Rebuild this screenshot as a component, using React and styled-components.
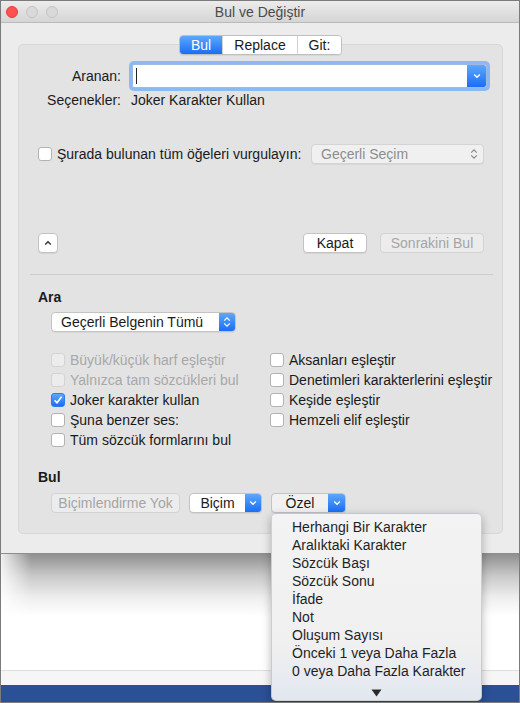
import React from 'react';
import styled, { createGlobalStyle } from 'styled-components';

const GlobalStyle = createGlobalStyle`
  html, body { margin: 0; padding: 0; background: #fff; }
  body {
    font-family: "Liberation Sans", Arial, sans-serif;
    font-size: 14px;
    color: #1a1a1a;
  }
  * { box-sizing: border-box; }
`;

const blueFill = 'linear-gradient(#5ea7fc, #1a6ef5)';

const ChevronDown = () => (
  <svg width="8" height="6" viewBox="0 0 8 6">
    <path d="M1.2 1.5L4 4.3 6.8 1.5" fill="none" stroke="#fff" strokeWidth="1.4" />
  </svg>
);

const UpDown = ({ color }) => (
  <svg width="8" height="12" viewBox="0 0 8 12">
    <path d="M1.2 4.6L4 1.8 6.8 4.6M1.2 7.4L4 10.2 6.8 7.4" fill="none" stroke={color} strokeWidth="1.2" />
  </svg>
);

const CaretUp = () => (
  <svg width="8" height="6" viewBox="0 0 8 6">
    <path d="M1.2 4.5L4 1.7 6.8 4.5" fill="none" stroke="#333" strokeWidth="1.4" />
  </svg>
);

const Tick = () => (
  <svg width="12" height="12" viewBox="0 0 12 12">
    <path d="M2.6 6.4L5 8.8 9.6 2.8" fill="none" stroke="#fff" strokeWidth="1.7" />
  </svg>
);

const Frame = styled.div`
  width: 520px;
  height: 703px;
  border: 1px solid #7b7b7b;
  display: flex;
  flex-direction: column;
  overflow: hidden;
  background: #fff;
`;

const Window = styled.div`
  background: #ececec;
  border-bottom: 1px solid #8e8e8e;
`;

const TitleBar = styled.div`
  height: 22px;
  display: grid;
  grid-template-columns: 1fr auto 1fr;
  align-items: center;
  padding: 0 5px;
  background: linear-gradient(#ececec, #d5d5d5);
  border-bottom: 1px solid #bababa;
`;

const Lights = styled.div`
  display: flex;
  gap: 8px;
`;

const Light = styled.span`
  width: 12px;
  height: 12px;
  border-radius: 50%;
  background: ${p => p.$red ? '#fd5250' : '#d9d9d9'};
  border: 1px solid ${p => p.$red ? '#e0403e' : '#c4c4c4'};
`;

const Title = styled.div`
  color: #4b4b4b;
  font-size: 14px;
`;

const Body = styled.div`
  padding: 12px 16px 19px 17px;
  display: flex;
  flex-direction: column;
`;

const TabGroup = styled.div`
  align-self: center;
  display: flex;
  height: 20px;
  margin-bottom: -11px;
  position: relative;
  z-index: 1;
  border: 1px solid #bfbfbf;
  border-radius: 4px;
  overflow: hidden;
  background: #fff;
  box-shadow: 0 1px 0 rgba(0, 0, 0, 0.05);
`;

const Tab = styled.div`
  width: ${p => p.$w}px;
  line-height: 18px;
  text-align: center;
  color: ${p => p.$active ? '#fff' : '#1a1a1a'};
  background: ${p => p.$active ? blueFill : '#fff'};
  & + & { border-left: 1px solid #d2d2d2; }
`;

const Panel = styled.div`
  background: #e3e3e3;
  border: 1px solid #d8d8d8;
  border-radius: 5px;
  padding: 19px 18px 20px 19px;
  display: flex;
  flex-direction: column;
`;

const FieldRow = styled.div`
  display: flex;
  align-items: center;
  height: ${p => p.$h}px;
  margin-top: ${p => p.$mt || 0}px;
`;

const FieldLabel = styled.div`
  width: 83px;
  text-align: right;
  margin-right: ${p => p.$gap}px;
  white-space: nowrap;
`;

const SearchField = styled.div`
  flex: 1;
  height: 24px;
  margin-right: -3px;
  display: flex;
  background: #fff;
  border: 1px solid #9dbbe2;
  border-radius: 2px;
  box-shadow: 0 0 0 3px #8ab9f4;
`;

const Caret = styled.span`
  width: 1px;
  height: 16px;
  margin: 3px 0 0 3px;
  background: #222;
`;

const FieldArrow = styled.span`
  margin-left: auto;
  width: 19px;
  display: flex;
  align-items: center;
  justify-content: center;
  background: ${blueFill};
  border-radius: 0 2px 2px 0;
`;

const CheckRow = styled.label`
  display: flex;
  align-items: center;
  gap: 5px;
  height: 20px;
  white-space: nowrap;
  color: ${p => p.$disabled ? '#a8a8a8' : '#1a1a1a'};
`;

const Box = styled.span`
  width: 14px;
  height: 14px;
  flex-shrink: 0;
  border-radius: 3px;
  display: inline-flex;
  align-items: center;
  justify-content: center;
  border: 1px solid ${p => p.$checked ? '#2d7bf1' : p.$disabled ? '#d3d3d3' : '#b3b3b3'};
  background: ${p => p.$checked ? blueFill : p.$disabled ? '#ececec' : '#fff'};
`;

const Select = styled.div`
  width: ${p => p.$w}px;
  height: 20px;
  margin-left: ${p => p.$push ? 'auto' : '0'};
  display: flex;
  align-items: stretch;
  border: 1px solid ${p => p.$disabled ? '#d4d4d4' : '#c4c4c4'};
  border-radius: 4px;
  overflow: hidden;
  background: ${p => p.$disabled ? '#f0f0f0' : '#fff'};
  color: ${p => p.$disabled ? '#8d8d8d' : '#1a1a1a'};
  box-shadow: 0 1px 0 rgba(0, 0, 0, 0.05);
`;

const SelectText = styled.span`
  flex: 1;
  line-height: 18px;
  padding-left: ${p => p.$pl}px;
  white-space: nowrap;
`;

const Stepper = styled.span`
  width: ${p => p.$w}px;
  display: flex;
  align-items: center;
  justify-content: center;
  background: ${p => p.$blue ? blueFill : 'transparent'};
`;

const ButtonRow = styled.div`
  display: flex;
  align-items: center;
  gap: ${p => p.$gap || 0}px;
  height: 20px;
  margin-top: ${p => p.$mt}px;
  padding-left: ${p => p.$indent || 0}px;
`;

const PushButton = styled.button`
  width: ${p => p.$w}px;
  height: 20px;
  padding: 0;
  margin-left: ${p => p.$ml || 0}px;
  display: flex;
  align-items: center;
  justify-content: center;
  font-family: inherit;
  font-size: 14px;
  white-space: nowrap;
  border-radius: 4px;
  border: 1px solid ${p => p.disabled ? '#d3d3d3' : '#c3c3c3'};
  background: ${p => p.disabled ? '#ececec' : '#fff'};
  color: ${p => p.disabled ? '#a5a5a5' : '#1a1a1a'};
  box-shadow: ${p => p.disabled ? 'none' : '0 1px 0 rgba(0,0,0,0.06)'};
`;

const Separator = styled.div`
  height: 1px;
  background: #cdcdcd;
  margin: 21px -9px 0 -8px;
`;

const Heading = styled.div`
  font-weight: bold;
  height: 16px;
  line-height: 16px;
  margin-top: ${p => p.$mt}px;
`;

const Indent = styled.div`
  padding-left: 13px;
  margin-top: ${p => p.$mt}px;
`;

const OptionGrid = styled.div`
  display: grid;
  grid-template-columns: 219px 1fr;
  grid-auto-flow: column;
  grid-template-rows: repeat(5, 20px);
  padding-left: 13px;
  margin-top: 18px;
`;

const PopupWrap = styled.div`
  position: relative;
`;

const PopupButton = styled.div`
  width: ${p => p.$w}px;
  height: 20px;
  display: flex;
  border: 1px solid #c3c3c3;
  border-radius: 4px;
  overflow: hidden;
  background: ${p => p.$open ? '#f1f1f1' : '#fff'};
  box-shadow: 0 1px 0 rgba(0, 0, 0, 0.06);
`;

const PopupText = styled.span`
  flex: 1;
  text-align: center;
  line-height: 18px;
`;

const Menu = styled.div`
  position: absolute;
  top: 100%;
  left: 0;
  width: 211px;
  height: 188px;
  z-index: 5;
  padding-top: 4px;
  border: 1px solid rgba(0, 0, 0, 0.14);
  border-radius: 5px;
  background: linear-gradient(#f3f3f3, #f0f0f0 70%, #e2e7f0);
  box-shadow: 0 3px 10px rgba(0, 0, 0, 0.28);
`;

const MenuItem = styled.div`
  height: 18px;
  line-height: 18px;
  padding-left: 20px;
  color: #1f1f1f;
  white-space: nowrap;
`;

const MenuMore = styled.div`
  height: 18px;
  margin-top: 4px;
  display: flex;
  align-items: center;
  justify-content: center;
`;

const Desktop = styled.div`
  flex: 1;
  display: flex;
  flex-direction: column;
`;

const Shade = styled.div`
  flex: 1;
  background:
    linear-gradient(to right, rgba(255,255,255,0.85), rgba(255,255,255,0) 30px),
    linear-gradient(#8f8f8f, #c9c9c9 22px, #efefef 44px, #fff 62px);
`;

const Strip = styled.div`
  height: 15px;
  border-top: 1px solid #dfdfdf;
  background: #f6f6f6;
`;

const Ribbon = styled.div`
  height: 17px;
  background: #2a5096;
`;

const leftOptions = [
  { text: 'Büyük/küçük harf eşleştir', disabled: true },
  { text: 'Yalnızca tam sözcükleri bul', disabled: true },
  { text: 'Joker karakter kullan', checked: true },
  { text: 'Şuna benzer ses:' },
  { text: 'Tüm sözcük formlarını bul' },
];

const rightOptions = [
  'Aksanları eşleştir',
  'Denetimleri karakterlerini eşleştir',
  'Keşide eşleştir',
  'Hemzeli elif eşleştir',
];

const specials = [
  'Herhangi Bir Karakter',
  'Aralıktaki Karakter',
  'Sözcük Başı',
  'Sözcük Sonu',
  'İfade',
  'Not',
  'Oluşum Sayısı',
  'Önceki 1 veya Daha Fazla',
  '0 veya Daha Fazla Karakter',
];

const Check = ({ text, checked, disabled }) => (
  <CheckRow $disabled={disabled}>
    <Box $checked={checked} $disabled={disabled}>{checked && <Tick />}</Box>
    {text}
  </CheckRow>
);

export default function App() {
  return (
    <Frame>
      <GlobalStyle />
      <Window>
        <TitleBar>
          <Lights>
            <Light $red />
            <Light />
            <Light />
          </Lights>
          <Title>Bul ve Değiştir</Title>
          <span />
        </TitleBar>
        <Body>
          <TabGroup>
            <Tab $w={42} $active>Bul</Tab>
            <Tab $w={75}>Replace</Tab>
            <Tab $w={44}>Git:</Tab>
          </TabGroup>
          <Panel>
            <FieldRow $h={24}>
              <FieldLabel $gap={11}>Aranan:</FieldLabel>
              <SearchField>
                <Caret />
                <FieldArrow><ChevronDown /></FieldArrow>
              </SearchField>
            </FieldRow>
            <FieldRow $h={16} $mt={4}>
              <FieldLabel $gap={10}>Seçenekler:</FieldLabel>
              Joker Karakter Kullan
            </FieldRow>
            <FieldRow $h={20} $mt={36}>
              <Check text="Şurada bulunan tüm öğeleri vurgulayın:" />
              <Select $w={173} $push $disabled>
                <SelectText $pl={9}>Geçerli Seçim</SelectText>
                <Stepper $w={18}><UpDown color="#8a8a8a" /></Stepper>
              </Select>
            </FieldRow>
            <ButtonRow $mt={69}>
              <PushButton $w={20}><CaretUp /></PushButton>
              <PushButton $w={64} $ml={245}>Kapat</PushButton>
              <PushButton $w={104} $ml={13} disabled>Sonrakini Bul</PushButton>
            </ButtonRow>
            <Separator />
            <Heading $mt={14}>Ara</Heading>
            <Indent $mt={7}>
              <Select $w={185}>
                <SelectText $pl={9}>Geçerli Belgenin Tümü</SelectText>
                <Stepper $w={16} $blue><UpDown color="#fff" /></Stepper>
              </Select>
            </Indent>
            <OptionGrid>
              {leftOptions.map(o => <Check key={o.text} {...o} />)}
              {rightOptions.map(t => <Check key={t} text={t} />)}
            </OptionGrid>
            <Heading $mt={19}>Bul</Heading>
            <ButtonRow $mt={8} $indent={13} $gap={9}>
              <PushButton $w={129} disabled>Biçimlendirme Yok</PushButton>
              <PopupButton $w={73}>
                <PopupText>Biçim</PopupText>
                <Stepper $w={16} $blue><ChevronDown /></Stepper>
              </PopupButton>
              <PopupWrap>
                <PopupButton $w={75} $open>
                  <PopupText>Özel</PopupText>
                  <Stepper $w={17} $blue><ChevronDown /></Stepper>
                </PopupButton>
                <Menu>
                  {specials.map(s => <MenuItem key={s}>{s}</MenuItem>)}
                  <MenuMore>
                    <svg width="11" height="8" viewBox="0 0 11 8">
                      <polygon points="0.5,0.5 10.5,0.5 5.5,7.5" fill="#2a2a2a" />
                    </svg>
                  </MenuMore>
                </Menu>
              </PopupWrap>
            </ButtonRow>
          </Panel>
        </Body>
      </Window>
      <Desktop>
        <Shade />
        <Strip />
        <Ribbon />
      </Desktop>
    </Frame>
  );
}
